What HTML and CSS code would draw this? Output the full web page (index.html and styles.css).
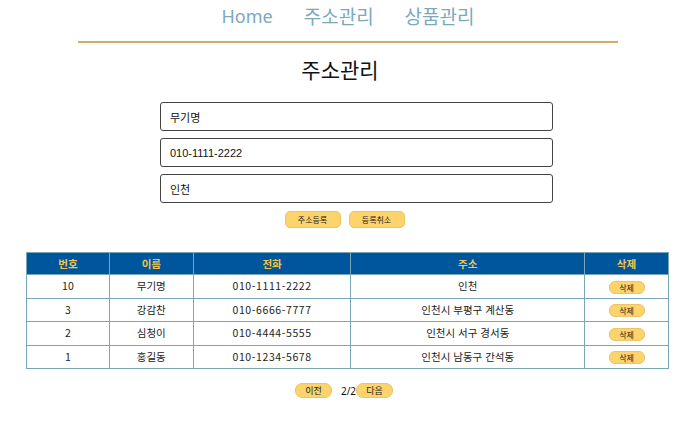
FILE: index.html
```html
<!DOCTYPE html>
<html lang="ko">
<head>
<meta charset="utf-8">
<link rel="stylesheet" href="styles.css">
</head>
<body>
<nav class="nav">
  <a class="nav-link nav-home">Home</a>
  <a class="nav-link">주소관리</a>
  <a class="nav-link">상품관리</a>
</nav>
<h1 class="title">주소관리</h1>
<form class="form">
  <input class="field" value="무기명">
  <input class="field" value="010-1111-2222">
  <input class="field" value="인천">
  <div class="form-actions">
    <button type="button" class="btn btn-form">주소등록</button>
    <button type="button" class="btn btn-form">등록취소</button>
  </div>
</form>
<table class="table">
  <thead>
    <tr><th class="c1">번호</th><th class="c2">이름</th><th class="c3">전화</th><th class="c4">주소</th><th class="c5">삭제</th></tr>
  </thead>
  <tbody>
    <tr><td>10</td><td>무기명</td><td class="tel">010-1111-2222</td><td>인천</td><td><button class="btn btn-del">삭제</button></td></tr>
    <tr><td>3</td><td>강감찬</td><td class="tel">010-6666-7777</td><td>인천시 부평구 계산동</td><td><button class="btn btn-del">삭제</button></td></tr>
    <tr><td>2</td><td>심청이</td><td class="tel">010-4444-5555</td><td>인천시 서구 경서동</td><td><button class="btn btn-del">삭제</button></td></tr>
    <tr><td>1</td><td>홍길동</td><td class="tel">010-1234-5678</td><td>인천시 남동구 간석동</td><td><button class="btn btn-del">삭제</button></td></tr>
  </tbody>
</table>
<div class="pager">
  <button class="btn btn-page">이전</button>
  <span class="pager-num">2/2</span>
  <button class="btn btn-page">다음</button>
</div>
</body>
</html>
```
FILE: styles.css
```css
* { box-sizing: border-box; }
body {
  margin: 0;
  font-family: "Noto Sans CJK KR", "Noto Sans", sans-serif;
  color: #111;
  background: #fff;
}
.nav {
  width: 540px;
  margin: 0 0 0 78px;
  height: 43px;
  border-bottom: 2px solid #d2ad68;
  display: flex;
  justify-content: center;
  gap: 31px;
  padding-top: 2px;
}
.nav-link {
  font-size: 19px;
  line-height: 28px;
  color: #7ba8bd;
  text-decoration: none;
}
.nav-home {
  font-family: "Noto Sans", sans-serif;
  font-size: 18px;
}
.title {
  margin: 10px 0 0;
  font-size: 21px;
  font-weight: 400;
  line-height: 32px;
  text-align: center;
  padding-right: 8px;
}
.form {
  width: 393px;
  margin: 17px 0 0 160px;
  display: flex;
  flex-direction: column;
  gap: 7px;
}
.field {
  height: 29px;
  border: 1px solid #444;
  border-radius: 3px;
  padding: 0 9px;
  font-family: "Liberation Sans", "Noto Sans CJK KR", sans-serif;
  font-size: 11px;
  color: #111;
}
.form-actions {
  display: flex;
  justify-content: center;
  gap: 8px;
  margin-left: -24px;
  margin-top: 1px;
}
.btn {
  background: #fdd36c;
  border: 1px solid #e9c46a;
  font-family: "Noto Sans CJK KR", sans-serif;
  color: #222;
  padding: 0;
  cursor: pointer;
}
.btn-form {
  width: 56px;
  height: 17px;
  border-radius: 5px;
  font-size: 8px;
  line-height: 15px;
}
.table {
  margin: 24px 0 0 26px;
  width: 643px;
  border-collapse: collapse;
  font-size: 10.5px;
  text-align: center;
}
.table th, .table td {
  border: 1px solid #7aa7b8;
  padding: 0;
  line-height: 14px;
}
.table th {
  background: #00569d;
  color: #f4c64d;
  height: 22px;
  font-weight: 700;
}
.table td {
  height: 23.5px;
  color: #222;
}
.table td.tel {
  letter-spacing: 0.6px;
}
.c1 { width: 83px; }
.c2 { width: 84px; }
.c3 { width: 158px; }
.c4 { width: 234px; }
.c5 { width: 84px; }
.btn-del {
  width: 36px;
  height: 13px;
  border-radius: 6px;
  font-size: 8px;
  line-height: 11px;
  vertical-align: middle;
}
.pager {
  display: flex;
  justify-content: center;
  align-items: center;
  margin: 14px 0 0;
  padding-left: 0;
  font-size: 10px;
}
.btn-page {
  width: 37px;
  height: 15px;
  border-radius: 7px;
  font-size: 9px;
  line-height: 13px;
}
.pager-num {
  margin-left: 9px;
  font-family: "Noto Sans", sans-serif;
}
```
